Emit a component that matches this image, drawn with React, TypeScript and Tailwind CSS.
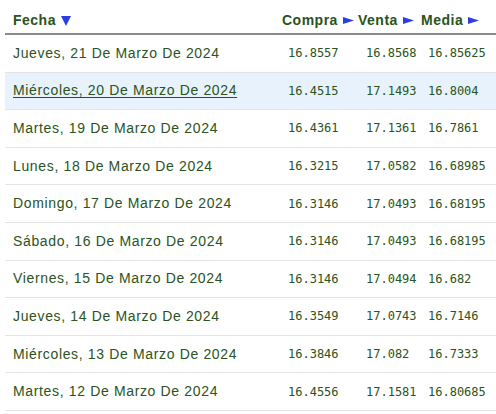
import React from "react";

const rows = [
  ["Jueves, 21 De Marzo De 2024", "16.8557", "16.8568", "16.85625"],
  ["Miércoles, 20 De Marzo De 2024", "16.4515", "17.1493", "16.8004"],
  ["Martes, 19 De Marzo De 2024", "16.4361", "17.1361", "16.7861"],
  ["Lunes, 18 De Marzo De 2024", "16.3215", "17.0582", "16.68985"],
  ["Domingo, 17 De Marzo De 2024", "16.3146", "17.0493", "16.68195"],
  ["Sábado, 16 De Marzo De 2024", "16.3146", "17.0493", "16.68195"],
  ["Viernes, 15 De Marzo De 2024", "16.3146", "17.0494", "16.682"],
  ["Jueves, 14 De Marzo De 2024", "16.3549", "17.0743", "16.7146"],
  ["Miércoles, 13 De Marzo De 2024", "16.3846", "17.082", "16.7333"],
  ["Martes, 12 De Marzo De 2024", "16.4556", "17.1581", "16.80685"],
];

const grid = "grid grid-cols-[275px_78px_62px_66px]";

const Down = () => (
  <svg width="10" height="10" viewBox="0 0 10 10" className="inline-block ml-[5px] align-[-1px]">
    <path d="M0 0H10L5 10Z" fill="#2b3fe0" />
  </svg>
);

const Right = () => (
  <svg width="11" height="7" viewBox="0 0 11 7" className="inline-block ml-[5px] align-[1px]">
    <path d="M0 0L11 3.5L0 7Z" fill="#2b3fe0" />
  </svg>
);

const App = () => {
  return (
    <div className="bg-white w-[496px] h-[414px] pl-[5px] text-[#2a5320] font-['Liberation_Sans',Arial,sans-serif]">
      {/* header */}
      <div className={`${grid} h-[35px] items-center pt-[7px] border-b-2 border-[#8a8a8a] font-bold text-[14px] tracking-[0.5px]`}>
        <div className="pl-2">
          Fecha<Down />
        </div>
        <div className="pl-[2px]">
          Compra<Right />
        </div>
        <div>
          Venta<Right />
        </div>
        <div className="pl-px">
          Media<Right />
        </div>
      </div>

      {rows.map((r, i) => (
        <div
          key={i}
          className={`${grid} h-[37.6px] items-center border-b border-[#e4e4e4] ${
            i === 1 ? "bg-[#e8f2fc]" : ""
          }`}
        >
          <div className={`pl-2 text-[14px] tracking-[0.65px] ${i === 1 ? "underline underline-offset-2" : ""}`}>
            {r[0]}
          </div>
          <div className="pl-2 font-['DejaVu_Sans_Mono',monospace] text-[12px]">{r[1]}</div>
          <div className="pl-2 font-['DejaVu_Sans_Mono',monospace] text-[12px]">{r[2]}</div>
          <div className="pl-2 font-['DejaVu_Sans_Mono',monospace] text-[12px]">{r[3]}</div>
        </div>
      ))}
    </div>
  );
};

export default App;
